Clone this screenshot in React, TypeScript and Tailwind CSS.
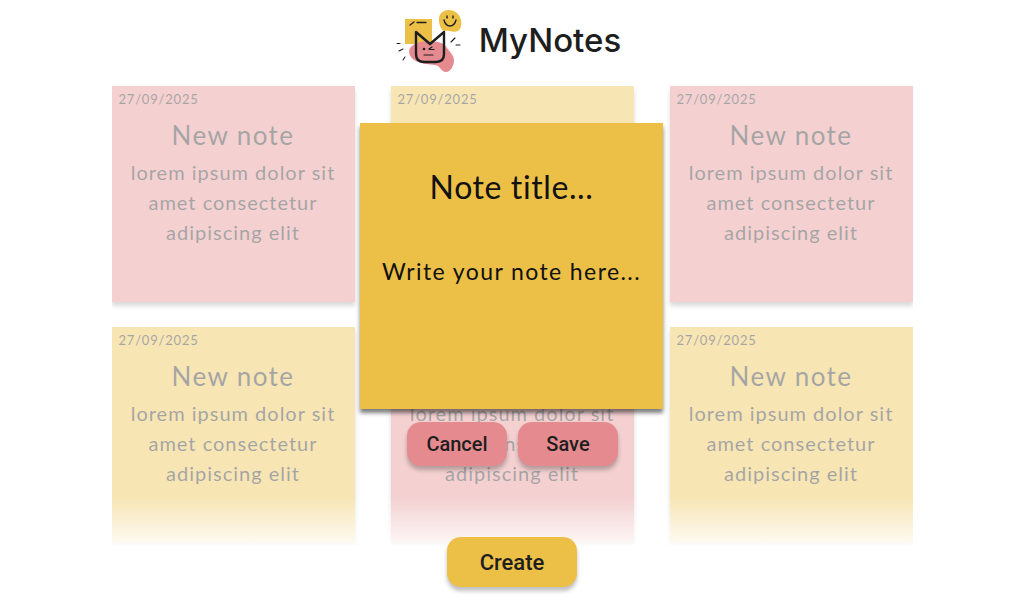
import React from 'react';

type Note = {
    color: string;
};

const notes: Note[] = [
    { color: 'bg-[#e58b8f]' },
    { color: 'bg-[#ecbf47]' },
    { color: 'bg-[#e58b8f]' },
    { color: 'bg-[#ecbf47]' },
    { color: 'bg-[#e58b8f]' },
    { color: 'bg-[#ecbf47]' },
];

function Logo() {
    return (
        <svg width="80" height="70" viewBox="0 0 80 70" fill="none">
            <rect x="15" y="14" width="27" height="25" fill="#ecbf47" />
            <path d="M49 14c0-6 5-9 10-9 5 0 9 3 11 7 2 5 2 11-2 14-5 2-9-1-13 0-4 0-6-6-6-12z" fill="#ecbf47" />
            <path d="M20 43c5-6 14-8 22-6 6-1 12 1 15 6 3 4 7 8 7 12 0 5-3 12-8 12-5 0-5-6-11-7-6-1-12-1-17-3-6-2-11-8-8-14z" fill="#e58b8f" />
            <path d="M26 27v22c0 5 3 8 8 8h12c5 0 8-3 8-8V27L40 39 26 27z" stroke="#1e1e1e" strokeWidth="2.4" strokeLinejoin="round" />
            <path d="M20 20l4-3M27 17.500h9" stroke="#1e1e1e" strokeWidth="1.300" strokeLinecap="round" />
            <path d="M54 15c1 4 3 6 6 6 3 0 5-2 6-6" stroke="#1e1e1e" strokeWidth="1.400" strokeLinecap="round" />
            <path d="M57 11v2M63 11v2" stroke="#1e1e1e" strokeWidth="1.400" strokeLinecap="round" />
            <circle cx="34" cy="44" r="1.300" fill="#1e1e1e" />
            <path d="M39 44l3-2M39 44.500h5M34 50h9" stroke="#1e1e1e" strokeWidth="1.200" strokeLinecap="round" />
            <path d="M61 37l4-4M66 40h4M7 38.500h3M9 46l4-2M13 55l2-3" stroke="#1e1e1e" strokeWidth="1.100" strokeLinecap="round" />
        </svg>
    );
}

function NoteCard({ color }: Note) {
    return (
        <div className={`h-[216px] opacity-40 px-[7px] pt-[4px] shadow-[0_4px_4px_rgba(0,0,0,0.35)] text-[#1e1e1e] font-['Lato',sans-serif] font-normal ${color}`}>
            <div className="text-[13px] leading-[18px] tracking-[0.8px]">27/09/2025</div>
            <div className="mt-[9px] text-center text-[26px] leading-[36px] tracking-[1.4px]">New note</div>
            <div className="mt-[4px] text-center text-[20px] leading-[30px] tracking-[1px]">
                lorem ipsum dolor sit
                <br />
                amet consectetur
                <br />
                adipiscing elit
            </div>
        </div>
    );
}

export default function App() {
    return (
        <div className="relative h-[600px] w-[1024px] overflow-hidden bg-white font-['Roboto',sans-serif] text-[#1e1e1e]">
            {/* Header */}
            <header className="flex h-[86px] items-start justify-center pt-[5px] pr-[13px]">
                <Logo />
                <h1 className="ml-[9px] mt-[12px] font-['Inter',sans-serif] text-[33px] leading-[46px] font-medium">MyNotes</h1>
            </header>

            {/* Notes grid */}
            <div className="relative mx-auto h-[459px] w-[801px] overflow-hidden">
                <div className="grid grid-cols-3 gap-x-[36px] gap-y-[25px] pb-[8px]">
                    {notes.map((note, i) => (
                        <NoteCard key={i} color={note.color} />
                    ))}
                </div>
                <div className="absolute inset-x-0 bottom-[-8px] h-[56px] bg-gradient-to-b from-transparent to-white" />
            </div>

            {/* Create button */}
            <button className="absolute left-[447px] top-[537px] h-[50px] w-[130px] rounded-[14px] bg-[#ecbf47] text-[22px] font-medium shadow-[0_4px_4px_rgba(0,0,0,0.25)]">
                Create
            </button>

            {/* Editor modal */}
            <div className="absolute left-[360px] top-[123px] flex h-[286px] w-[303px] flex-col items-center bg-[#ecbf47] font-['Lato',sans-serif] font-normal text-[#111] shadow-[0_4px_4px_rgba(0,0,0,0.5)]">
                <div className="mt-[41px] text-[32px] leading-[46px] tracking-[0.6px]">Note title...</div>
                <div className="mt-[41px] text-[23px] leading-[40px] tracking-[1.4px] whitespace-nowrap">Write your note here...</div>
            </div>

            {/* Editor actions */}
            <div className="absolute left-[407px] top-[422px] flex gap-[11px]">
                <button className="h-[44px] w-[100px] rounded-[14px] bg-[#e58b8f] text-[20px] font-medium shadow-[0_4px_4px_rgba(0,0,0,0.25)]">
                    Cancel
                </button>
                <button className="h-[44px] w-[100px] rounded-[14px] bg-[#e58b8f] text-[20px] font-medium shadow-[0_4px_4px_rgba(0,0,0,0.25)]">
                    Save
                </button>
            </div>
        </div>
    );
}
